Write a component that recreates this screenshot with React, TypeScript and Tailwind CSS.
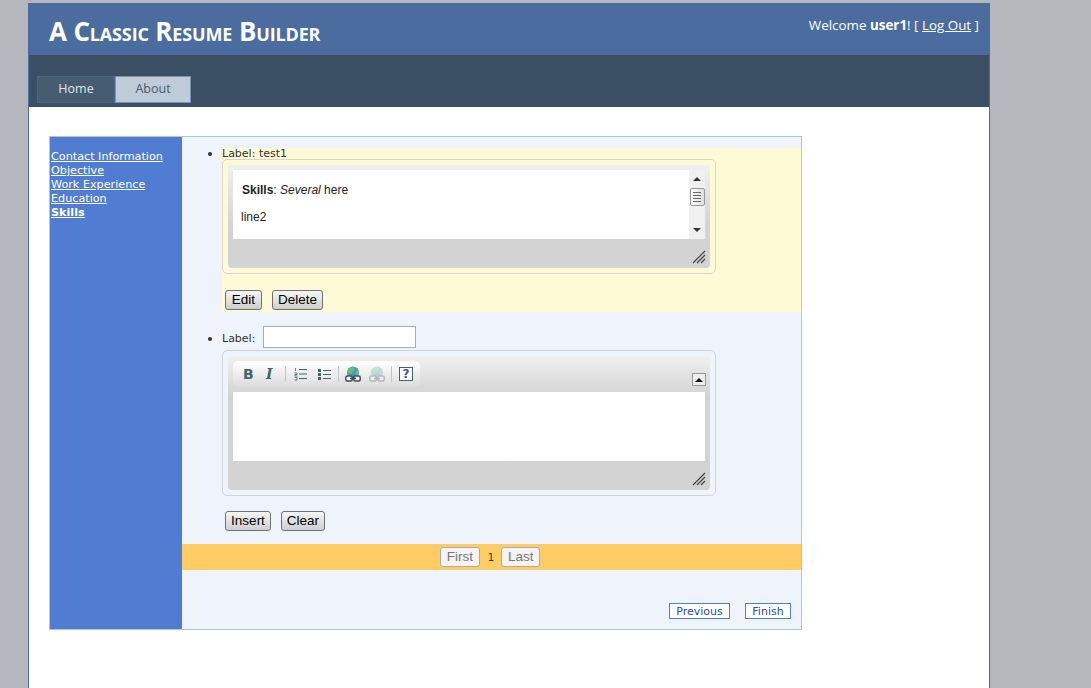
const Btn = ({ label, w }: { label: string; w: string }) => (
  <button className={`${w} h-[20px] rounded-[3px] border border-[#707070] bg-linear-to-b from-[#f6f6f6] to-[#cfcfcf] text-[13.5px] leading-none text-black font-['Liberation_Sans',sans-serif]`}>
    {label}
  </button>
);

const ResizeGrip = () => (
  <svg width="14" height="14" viewBox="0 0 14 14" className="absolute right-[4px] bottom-[4px]">
    <path d="M1 13 13 1M5 13 13 5M9 13 13 9" stroke="#444" strokeWidth="1.2" fill="none" />
  </svg>
);

const Globe = ({ faded }: { faded?: boolean }) => (
  <svg width="16" height="16" viewBox="0 0 16 16" className={faded ? 'opacity-30' : ''}>
    <circle cx="8" cy="6.5" r="6" fill="#4c8fd8" />
    <path d="M3 3.500 7 .8 10 1.500 9 5 6.500 8 3 7ZM10 6l3-2 .8 4-3.300 2Z" fill="#63c463" />
    <rect x=".8" y="10" width="6.400" height="5" rx="1.500" fill="#fff" stroke="#37504f" strokeWidth="1.500" />
    <rect x="8.800" y="10" width="6.400" height="5" rx="1.500" fill="#fff" stroke="#37504f" strokeWidth="1.500" />
    <path d="M5 12.500h6" stroke="#37504f" strokeWidth="1.500" />
  </svg>
);

const Sep = () => <div className="w-px h-[16px] bg-[#c4c4c4]" />;

const Toolbar = () => (
  <div className="w-[187px] h-[26px] rounded-[5px] bg-linear-to-b from-white to-[#dcdcdc] flex items-center pl-[10px]">
    <span className="w-[10px] text-[14px] font-bold text-[#446565] font-['DejaVu_Sans',sans-serif] leading-none">B</span>
    <span className="ml-[13px] w-[9px] text-[14px] font-bold italic text-[#446565] font-['DejaVu_Serif',serif] leading-none">I</span>
    <div className="ml-[10px]"><Sep /></div>
    <svg width="14" height="14" viewBox="0 0 14 14" className="ml-[8px]">
      <path d="M5 2.500h8M5 7h8M5 11.500h8" stroke="#446565" />
      <path d="M1.500 1v3M.5 6h2.500v1.500h-2V9h2.500M.5 10.500H3V13H.5" stroke="#446565" strokeWidth=".8" fill="none" />
    </svg>
    <svg width="13" height="13" viewBox="0 0 13 13" className="ml-[10px]">
      <path d="M0 1h3v3H0zM0 5h3v3H0zM0 9h3v3H0z" fill="#446565" />
      <path d="M5 2.500h8M5 6.500h8M5 10.500h8" stroke="#446565" />
    </svg>
    <div className="ml-[7px]"><Sep /></div>
    <div className="ml-[6px]"><Globe /></div>
    <div className="ml-[8px]"><Globe faded /></div>
    <div className="ml-[6px]"><Sep /></div>
    <span className="ml-[7px] w-[14px] h-[14px] border border-[#446565] bg-white flex items-center justify-center text-[12px] font-bold text-[#4c4cb0] leading-none font-['DejaVu_Sans',sans-serif]">?</span>
  </div>
);

export default function App() {
  return (
    <div className="h-[688px] overflow-hidden bg-[#b6b7bc] pt-[3px] font-['DejaVu_Sans',sans-serif]">
      <div className="ml-[28px] w-[962px] h-[700px] border border-[#4b6c9e] bg-white">
        {/* header */}
        <div className="h-[51px] bg-[#4b6c9e] flex justify-between text-white">
          <h1 className="ml-[20px] mt-[9px] text-[26px] leading-[36px] font-bold [font-variant:small-caps] font-['Open_Sans',sans-serif] tracking-[-0.15px]">A Classic Resume Builder</h1>
          <div className="mr-[10px] mt-[12px] text-[13.4px] leading-[19px] font-['Open_Sans',sans-serif]">
            Welcome <b>user1</b>! [ <a className="underline">Log Out</a> ]
          </div>
        </div>
        {/* nav */}
        <div className="h-[52px] bg-[#3a4f63] flex items-end pb-[4px] pl-[8px] text-[12.5px] font-['Open_Sans',sans-serif]">
          <div className="w-[78px] h-[27px] bg-[#465c71] border border-[#4b6c9e]/60 text-[#dde4ec] flex items-center justify-center">Home</div>
          <div className="w-[76px] h-[27px] bg-[#bfcbd6] border border-[#4b6c9e]/60 text-[#465c71] flex items-center justify-center">About</div>
        </div>
        {/* wizard */}
        <div className="ml-[20px] mt-[29px] w-[753px] h-[494px] border border-[#b0c4de] flex bg-[#eff3fb]">
          <div className="w-[132px] shrink-0 bg-[#507cd1] pt-[13px] pl-[1px] text-[11.2px] leading-[14px] text-white">
            <a className="block underline">Contact Information</a>
            <a className="block underline">Objective</a>
            <a className="block underline">Work Experience</a>
            <a className="block underline">Education</a>
            <a className="block underline font-bold">Skills</a>
          </div>
          <div className="flex-1 flex flex-col text-[11px]">
            {/* saved item */}
            <div className="mt-[11px] pl-[40px] relative">
              <span className="absolute left-[26px] top-[4px] w-[4px] h-[4px] rounded-full bg-[#333]" />
              <div className="h-[164px] bg-[#fffad6] flex flex-col">
                <div className="h-[11px] text-[11px] leading-[11px] text-[#333]">Label: test1</div>
                <div className="w-[494px] h-[115px] border border-[#d8d8c8] rounded-[5px] p-[5px]">
                  <div className="relative h-[103px] rounded-[4px] bg-linear-to-b from-[#f0f0f0] via-[#d3d3d3] via-[60%] to-[#d3d3d3] pt-[5px] px-[5px]">
                    <div className="h-[69px] bg-white flex font-['Liberation_Sans',sans-serif] text-[12px] text-[#222]">
                      <div className="flex-1 pl-[9px] pt-[13px]">
                        <p className="leading-[14px]"><b>Skills</b>: <i>Several</i> here</p>
                        <p className="leading-[14px] mt-[13px] -ml-[1px]">line2</p>
                      </div>
                      <div className="w-[16px] bg-[#f0f0f0] flex flex-col items-center">
                        <span className="mt-[7px] border-x-[4px] border-b-[4px] border-x-transparent border-b-[#333]" />
                        <div className="mt-[7px] w-[15px] h-[18px] rounded-[2px] border border-[#999] bg-linear-to-r from-white to-[#ddd] flex flex-col items-center justify-center gap-[2px]">
                          <span className="w-[8px] h-px bg-[#666]" />
                          <span className="w-[8px] h-px bg-[#666]" />
                          <span className="w-[8px] h-px bg-[#666]" />
                          <span className="w-[8px] h-px bg-[#666]" />
                        </div>
                        <span className="mt-[22px] border-x-[4px] border-t-[4px] border-x-transparent border-t-[#333]" />
                      </div>
                    </div>
                    <ResizeGrip />
                  </div>
                </div>
                <div className="mt-[16px] pl-[3px] flex gap-[10px]">
                  <Btn label="Edit" w="w-[37px]" />
                  <Btn label="Delete" w="w-[51px]" />
                </div>
              </div>
            </div>
            {/* new item */}
            <div className="pl-[40px] relative">
              <span className="absolute left-[26px] top-[25px] w-[4px] h-[4px] rounded-full bg-[#333]" />
              <div className="mt-[14px] mb-[2px] h-[22px] flex items-center text-[11px] text-[#333]">
                <span className="mt-[4px]">Label:</span>
                <input className="ml-[8px] w-[153px] h-[22px] bg-white border border-[#aaaab4]" />
              </div>
              <div className="w-[494px] h-[146px] border border-[#cfd3dc] rounded-[5px] p-[5px]">
                <div className="relative h-[134px] rounded-[4px] bg-linear-to-b from-[#f0f0f0] via-[#d3d3d3] via-[30%] to-[#d3d3d3] pt-[5px] px-[5px]">
                  <Toolbar />
                  <span className="absolute right-[4px] top-[17px] w-[14px] h-[13px] border border-[#999] bg-[#eee] flex items-center justify-center">
                    <span className="border-x-[4px] border-b-[4px] border-x-transparent border-b-black" />
                  </span>
                  <div className="mt-[5px] h-[69px] bg-white" />
                  <ResizeGrip />
                </div>
              </div>
              <div className="mt-[15px] pl-[3px] flex gap-[10px]">
                <Btn label="Insert" w="w-[46px]" />
                <Btn label="Clear" w="w-[44px]" />
              </div>
            </div>
            {/* pager */}
            <div className="mt-[13px] h-[26px] bg-[#ffcc66] flex items-center justify-center gap-[7px] pr-[3px] text-[10px] text-[#333]">
              <span className="mr-[1px] w-[40px] h-[20px] rounded-[3px] border border-[#aaa] bg-[#f4f4f4] text-[13.5px] leading-[18px] text-center text-[#777] font-['Liberation_Sans',sans-serif]">First</span>
              <span>1</span>
              <span className="w-[39px] h-[20px] rounded-[3px] border border-[#aaa] bg-[#f4f4f4] text-[13.5px] leading-[18px] text-center text-[#777] font-['Liberation_Sans',sans-serif]">Last</span>
            </div>
            {/* step nav */}
            <div className="mt-[33px] pr-[10px] flex justify-end gap-[15px] text-[11px] text-[#284e98]">
              <span className="w-[61px] h-[16px] bg-white border border-[#507cd1] text-center leading-[15px]">Previous</span>
              <span className="w-[46px] h-[16px] bg-white border border-[#507cd1] text-center leading-[15px]">Finish</span>
            </div>
          </div>
        </div>
      </div>
    </div>
  );
}
